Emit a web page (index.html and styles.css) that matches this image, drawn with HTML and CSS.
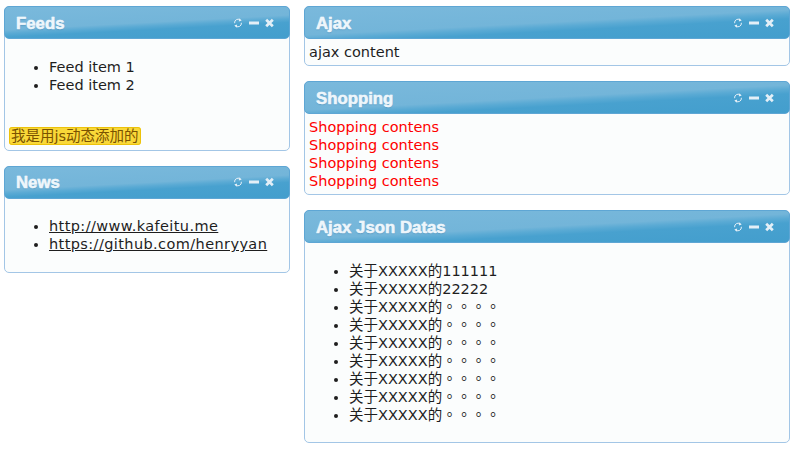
FILE: index.html
```html
<!DOCTYPE html>
<html>
<head>
<meta charset="utf-8">
<link rel="stylesheet" href="styles.css">
</head>
<body>
<div class="page">
  <div class="column">
    <div class="widget">
      <div class="head"><span class="title">Feeds</span>
        <span class="tools">
          <svg class="ico" width="10" height="12" viewBox="0 0 10 12"><path d="M7.9 3.4A3.6 3.6 0 0 0 1.6 6.2M2.1 8.6A3.6 3.6 0 0 0 8.4 5.8" fill="none" stroke="#e4eff7" stroke-width="1"/><path d="M6 1.2L8.7 3.5L5.9 4.5Z M4 10.8L1.3 8.5L4.1 7.5Z" fill="#e4eff7"/></svg>
          <svg class="ico" width="10" height="12" viewBox="0 0 10 12"><rect x="0" y="4.5" width="10" height="3" fill="#e4eff7"/></svg>
          <svg class="ico" width="9" height="12" viewBox="0 0 9 12"><path d="M1.2 2.7L7.8 9.3M7.8 2.7L1.2 9.3" stroke="#e4eff7" stroke-width="2.7"/></svg>
        </span>
      </div>
      <div class="body">
        <ul class="list">
          <li>Feed item 1</li>
          <li>Feed item 2</li>
        </ul>
        <div class="dyn"><span class="tag">我是用js动态添加的</span></div>
      </div>
    </div>
    <div class="widget">
      <div class="head"><span class="title">News</span>
        <span class="tools">
          <svg class="ico" width="10" height="12" viewBox="0 0 10 12"><path d="M7.9 3.4A3.6 3.6 0 0 0 1.6 6.2M2.1 8.6A3.6 3.6 0 0 0 8.4 5.8" fill="none" stroke="#e4eff7" stroke-width="1"/><path d="M6 1.2L8.7 3.5L5.9 4.5Z M4 10.8L1.3 8.5L4.1 7.5Z" fill="#e4eff7"/></svg>
          <svg class="ico" width="10" height="12" viewBox="0 0 10 12"><rect x="0" y="4.5" width="10" height="3" fill="#e4eff7"/></svg>
          <svg class="ico" width="9" height="12" viewBox="0 0 9 12"><path d="M1.2 2.7L7.8 9.3M7.8 2.7L1.2 9.3" stroke="#e4eff7" stroke-width="2.7"/></svg>
        </span>
      </div>
      <div class="body">
        <ul class="list">
          <li><a class="link" href="#">http://www.kafeitu.me</a></li>
          <li><a class="link" href="#">https://github.com/henryyan</a></li>
        </ul>
      </div>
    </div>
  </div>
  <div class="column">
    <div class="widget">
      <div class="head"><span class="title">Ajax</span>
        <span class="tools">
          <svg class="ico" width="10" height="12" viewBox="0 0 10 12"><path d="M7.9 3.4A3.6 3.6 0 0 0 1.6 6.2M2.1 8.6A3.6 3.6 0 0 0 8.4 5.8" fill="none" stroke="#e4eff7" stroke-width="1"/><path d="M6 1.2L8.7 3.5L5.9 4.5Z M4 10.8L1.3 8.5L4.1 7.5Z" fill="#e4eff7"/></svg>
          <svg class="ico" width="10" height="12" viewBox="0 0 10 12"><rect x="0" y="4.5" width="10" height="3" fill="#e4eff7"/></svg>
          <svg class="ico" width="9" height="12" viewBox="0 0 9 12"><path d="M1.2 2.7L7.8 9.3M7.8 2.7L1.2 9.3" stroke="#e4eff7" stroke-width="2.7"/></svg>
        </span>
      </div>
      <div class="body">
        <div>ajax content</div>
      </div>
    </div>
    <div class="widget">
      <div class="head"><span class="title">Shopping</span>
        <span class="tools">
          <svg class="ico" width="10" height="12" viewBox="0 0 10 12"><path d="M7.9 3.4A3.6 3.6 0 0 0 1.6 6.2M2.1 8.6A3.6 3.6 0 0 0 8.4 5.8" fill="none" stroke="#e4eff7" stroke-width="1"/><path d="M6 1.2L8.7 3.5L5.9 4.5Z M4 10.8L1.3 8.5L4.1 7.5Z" fill="#e4eff7"/></svg>
          <svg class="ico" width="10" height="12" viewBox="0 0 10 12"><rect x="0" y="4.5" width="10" height="3" fill="#e4eff7"/></svg>
          <svg class="ico" width="9" height="12" viewBox="0 0 9 12"><path d="M1.2 2.7L7.8 9.3M7.8 2.7L1.2 9.3" stroke="#e4eff7" stroke-width="2.7"/></svg>
        </span>
      </div>
      <div class="body red">
        <div>Shopping contens</div>
        <div>Shopping contens</div>
        <div>Shopping contens</div>
        <div>Shopping contens</div>
      </div>
    </div>
    <div class="widget">
      <div class="head"><span class="title">Ajax Json Datas</span>
        <span class="tools">
          <svg class="ico" width="10" height="12" viewBox="0 0 10 12"><path d="M7.9 3.4A3.6 3.6 0 0 0 1.6 6.2M2.1 8.6A3.6 3.6 0 0 0 8.4 5.8" fill="none" stroke="#e4eff7" stroke-width="1"/><path d="M6 1.2L8.7 3.5L5.9 4.5Z M4 10.8L1.3 8.5L4.1 7.5Z" fill="#e4eff7"/></svg>
          <svg class="ico" width="10" height="12" viewBox="0 0 10 12"><rect x="0" y="4.5" width="10" height="3" fill="#e4eff7"/></svg>
          <svg class="ico" width="9" height="12" viewBox="0 0 9 12"><path d="M1.2 2.7L7.8 9.3M7.8 2.7L1.2 9.3" stroke="#e4eff7" stroke-width="2.7"/></svg>
        </span>
      </div>
      <div class="body">
        <ul class="list cjk">
          <li>关于XXXXX的111111</li>
          <li>关于XXXXX的22222</li>
          <li>关于XXXXX的。。。。</li>
          <li>关于XXXXX的。。。。</li>
          <li>关于XXXXX的。。。。</li>
          <li>关于XXXXX的。。。。</li>
          <li>关于XXXXX的。。。。</li>
          <li>关于XXXXX的。。。。</li>
          <li>关于XXXXX的。。。。</li>
        </ul>
      </div>
    </div>
  </div>
</div>
</body>
</html>
```

FILE: styles.css
```css
html, body {
  margin: 0;
  padding: 0;
  background: #ffffff;
}
body {
  font-family: "DejaVu Sans", "Noto Sans CJK SC", sans-serif;
  font-size: 14.5px;
  line-height: 18px;
  color: #1e1e1e;
  text-spacing-trim: space-all;
}
.page {
  display: grid;
  grid-template-columns: 286px 486px;
  column-gap: 14px;
  align-items: start;
  padding: 6px 0 0 4px;
}
.column {
  display: flex;
  flex-direction: column;
  gap: 15px;
}
.widget {
  border: 1px solid #a3c6e6;
  border-radius: 5px;
  background: #fbfdfd;
}
.head {
  box-sizing: border-box;
  height: 33px;
  margin: -1px -1px 0;
  border: 1px solid #5ea6d4;
  border-radius: 5px;
  background: linear-gradient(177deg, #7ab9dc 0%, #73b5d9 50%, #5aaad4 58%, #48a1cf 66%, #439ecd 100%);
  display: flex;
  align-items: center;
  justify-content: space-between;
  padding: 0 15px 0 11px;
}
.title {
  font-family: "Liberation Sans", Arial, sans-serif;
  font-weight: bold;
  font-size: 16.8px;
  color: #eef6fb;
  -webkit-text-stroke: 0.35px #eef6fb;
  text-shadow: 0 0 1px #d4e8f4, 0 1px 1px rgba(40, 110, 160, 0.45);
  padding-top: 2px;
}
.tools {
  display: flex;
  align-items: center;
  gap: 6px;
}
.ico {
  display: block;
}
.body {
  padding: 4px;
}
.list {
  margin: 14.5px 0;
  padding-left: 40px;
}
.link {
  color: #1e1e1e;
  text-decoration: underline;
  letter-spacing: 0.4px;
}
.cjk {
  font-family: "DejaVu Sans", "Noto Sans CJK TC", sans-serif;
}
.dyn {
  margin-top: 33px;
  margin-bottom: 0;
  line-height: 19px;
}
.tag {
  font-family: "DejaVu Sans", "Noto Sans CJK SC", sans-serif;
  font-size: 14.5px;
  background: #f9d838;
  border: 1px solid #ecc20a;
  border-radius: 3px;
  color: #7a5200;
  padding: 0 1px;
}
.red {
  color: #ff0000;
}
```
